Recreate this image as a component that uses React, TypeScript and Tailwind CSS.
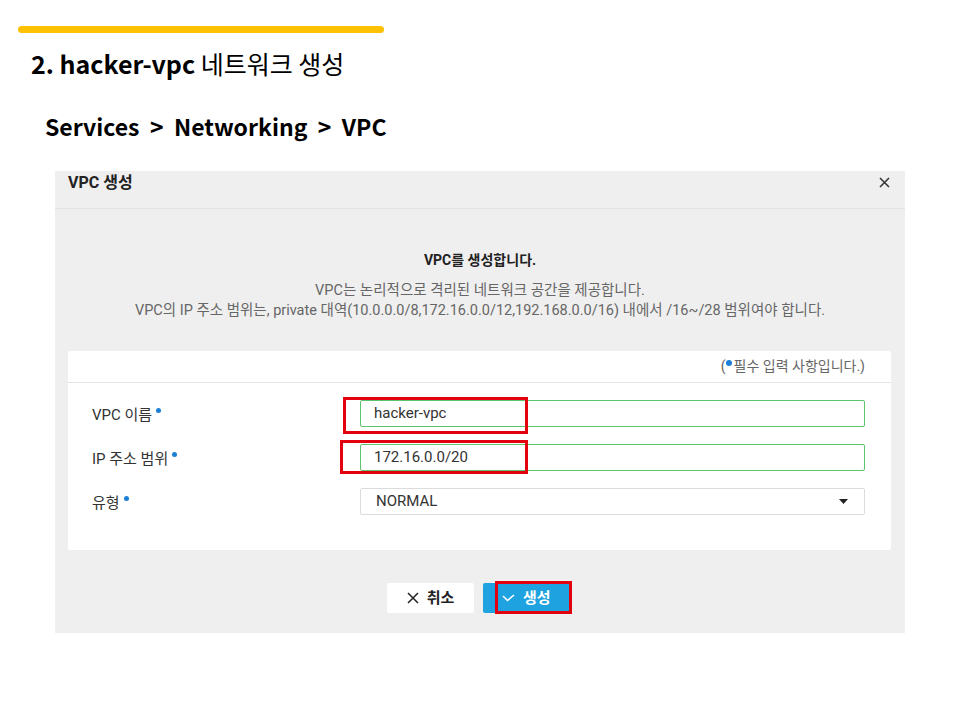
import React from "react";

const KR = "font-['Noto_Sans_CJK_KR',sans-serif]";
const UI = "font-['Roboto','Noto_Sans_CJK_KR',sans-serif]";

const Dot = () => (
  <span className="ml-[4px] inline-block h-[5px] w-[5px] -translate-y-[7px] rounded-full bg-[#1b7fd6]" />
);

const RedBox = ({ className }: { className: string }) => (
  <div className={`pointer-events-none absolute border-[3px] border-[#e3000f] ${className}`} />
);

type Field = { label: string; value: string; select?: boolean };

const fields: Field[] = [
  { label: "VPC 이름", value: "hacker-vpc" },
  { label: "IP 주소 범위", value: "172.16.0.0/20" },
  { label: "유형", value: "NORMAL", select: true },
];

const FormRow = ({ field }: { field: Field }) => (
  <div className="flex h-[27px] items-center">
    <div className="w-[292px] pl-[24px] pt-[3px] text-[15px] text-[#333]">
      {field.label}
      <Dot />
    </div>
    <div
      className={`flex h-[27px] flex-1 items-center justify-between rounded-[2px] border bg-white pl-[13px] pr-[16px] text-[15px] text-[#333] ${
        field.select ? "border-[#dcdcdc] pl-[15px]" : "border-[#5cc46a]"
      }`}
    >
      <span>{field.value}</span>
      {field.select && (
        <svg width="9" height="5" viewBox="0 0 9 5">
          <path d="M0 0h9L4.5 5z" fill="#222" />
        </svg>
      )}
    </div>
  </div>
);

export default function App() {
  return (
    <div className={`min-h-[720px] w-[960px] bg-white ${KR}`}>
      <div className="ml-[18px] h-[26px]" />
      <div className="ml-[18px] h-[7px] w-[366px] rounded-full bg-[#ffc000]" />

      <h1 className="ml-[31px] mt-[13px] text-[25px] leading-[34px] text-black">
        <span className="font-bold">2. hacker-vpc</span> 네트워크 생성
      </h1>

      <h2 className="ml-[45px] mt-[30px] whitespace-pre text-[23px] font-bold leading-[32px] text-black">
        {"Services  >  Networking  >  VPC"}
      </h2>

      <div className={`ml-[55px] mt-[29px] flex h-[462px] w-[850px] flex-col bg-[#efefef] ${UI}`}>
        <div className="flex h-[38px] items-center justify-between border-b border-[#e2e2e2] pl-[13px] pr-[15px]">
          <span className="-mt-[14px] text-[16px] font-bold text-[#222]">VPC 생성</span>
          <svg width="11" height="11" viewBox="0 0 11 11" className="-mt-[14px]">
            <path d="M1 1l9 9M10 1l-9 9" stroke="#333" strokeWidth="1.5" />
          </svg>
        </div>

        <div className="mt-[41px] text-center text-[14px] font-bold leading-[20px] text-[#222]">
          VPC를 생성합니다.
        </div>
        <div className="mt-[11px] text-center text-[14.5px] leading-[20px] text-[#666]">
          <p>VPC는 논리적으로 격리된 네트워크 공간을 제공합니다.</p>
          <p>VPC의 IP 주소 범위는, private 대역(10.0.0.0/8,172.16.0.0/12,192.168.0.0/16) 내에서 /16~/28 범위여야 합니다.</p>
        </div>

        <div className="relative ml-[13px] mr-[14px] mt-[30px] h-[199px] rounded-[2px] bg-white">
          <div className="flex h-[32px] items-center justify-end border-b border-[#e4e4e4] pr-[26px] text-[14px] text-[#666]">
            (<span className="mr-[2px] inline-block h-[6px] w-[6px] -translate-y-[4px] rounded-full bg-[#1b7fd6]" />
            필수 입력 사항입니다.)
          </div>
          <div className="flex flex-col gap-[17px] pr-[26px] pt-[17px]">
            {fields.map((f) => (
              <FormRow key={f.label} field={f} />
            ))}
          </div>
          <RedBox className="left-[275px] top-[46px] h-[37px] w-[185px]" />
          <RedBox className="left-[272px] top-[89px] h-[34px] w-[188px]" />
        </div>

        <div className="mt-[33px] flex justify-center gap-[9px] pr-[3px]">
          <button className="flex h-[30px] w-[87px] items-center justify-center gap-[8px] rounded-[2px] bg-white text-[15px] font-bold text-[#222]">
            <svg width="12" height="12" viewBox="0 0 12 12">
              <path d="M1 1l10 10M11 1L1 11" stroke="#222" strokeWidth="1.5" />
            </svg>
            취소
          </button>
          <div className="relative">
            <button className="flex h-[30px] w-[87px] items-center justify-start gap-[8px] rounded-[2px] bg-[#1fa3e0] pl-[19px] text-[15px] font-bold text-white">
              <svg width="13" height="8" viewBox="0 0 13 8">
                <path d="M1 2l4.5 4.5L12 1" stroke="#fff" strokeWidth="1.6" fill="none" />
              </svg>
              생성
            </button>
            <RedBox className="-top-[2px] left-[12px] h-[33px] w-[77px]" />
          </div>
        </div>
      </div>
    </div>
  );
}
